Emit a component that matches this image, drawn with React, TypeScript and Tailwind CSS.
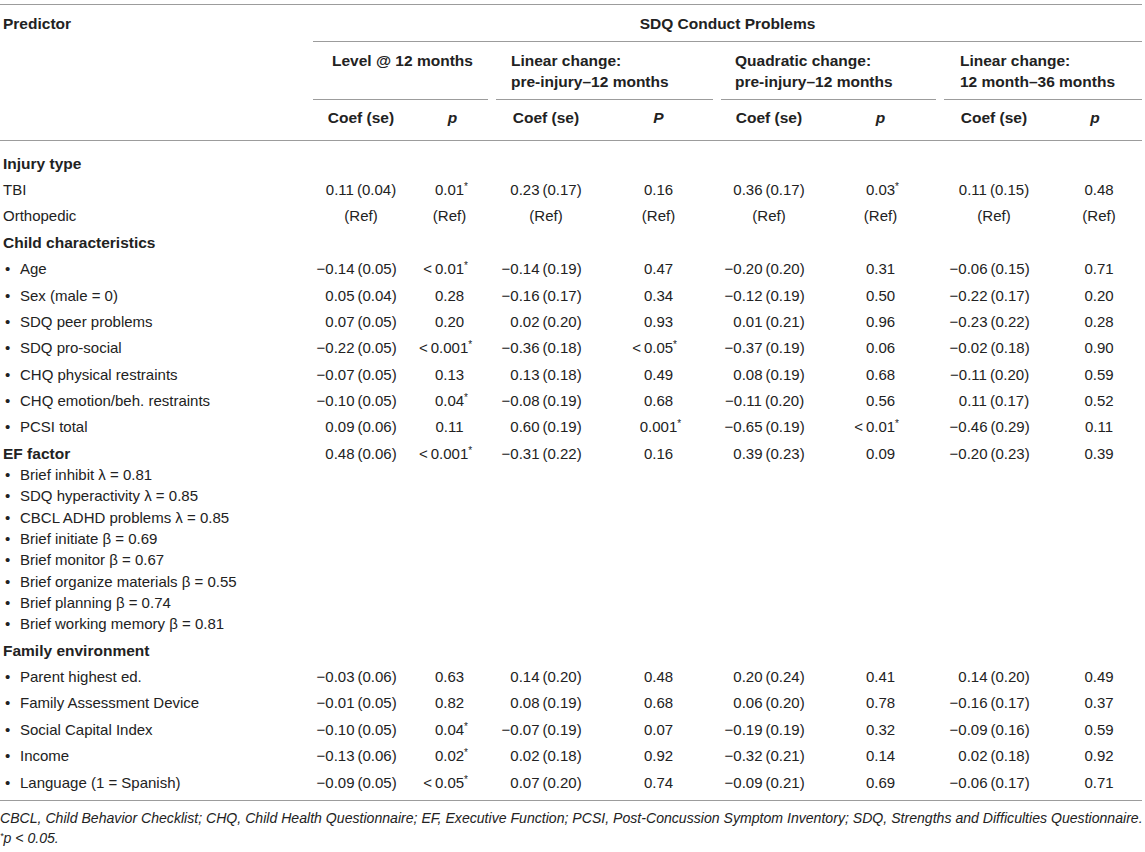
import React from "react";

type Row =
  | { kind: "head"; label: string }
  | { kind: "data"; label: string; bullet?: boolean; vals: string[] }
  | { kind: "ef"; label: string; items: string[]; vals: string[] };

const REF = ["(Ref)", "(Ref)", "(Ref)", "(Ref)", "(Ref)", "(Ref)", "(Ref)", "(Ref)"];

const rows: Row[] = [
  { kind: "head", label: "Injury type" },
  { kind: "data", label: "TBI", vals: ["0.11 (0.04)", "0.01*", "0.23 (0.17)", "0.16", "0.36 (0.17)", "0.03*", "0.11 (0.15)", "0.48"] },
  { kind: "data", label: "Orthopedic", vals: REF },
  { kind: "head", label: "Child characteristics" },
  { kind: "data", bullet: true, label: "Age", vals: ["−0.14 (0.05)", "<0.01*", "−0.14 (0.19)", "0.47", "−0.20 (0.20)", "0.31", "−0.06 (0.15)", "0.71"] },
  { kind: "data", bullet: true, label: "Sex (male = 0)", vals: ["0.05 (0.04)", "0.28", "−0.16 (0.17)", "0.34", "−0.12 (0.19)", "0.50", "−0.22 (0.17)", "0.20"] },
  { kind: "data", bullet: true, label: "SDQ peer problems", vals: ["0.07 (0.05)", "0.20", "0.02 (0.20)", "0.93", "0.01 (0.21)", "0.96", "−0.23 (0.22)", "0.28"] },
  { kind: "data", bullet: true, label: "SDQ pro-social", vals: ["−0.22 (0.05)", "<0.001*", "−0.36 (0.18)", "<0.05*", "−0.37 (0.19)", "0.06", "−0.02 (0.18)", "0.90"] },
  { kind: "data", bullet: true, label: "CHQ physical restraints", vals: ["−0.07 (0.05)", "0.13", "0.13 (0.18)", "0.49", "0.08 (0.19)", "0.68", "−0.11 (0.20)", "0.59"] },
  { kind: "data", bullet: true, label: "CHQ emotion/beh. restraints", vals: ["−0.10 (0.05)", "0.04*", "−0.08 (0.19)", "0.68", "−0.11 (0.20)", "0.56", "0.11 (0.17)", "0.52"] },
  { kind: "data", bullet: true, label: "PCSI total", vals: ["0.09 (0.06)", "0.11", "0.60 (0.19)", "0.001*", "−0.65 (0.19)", "<0.01*", "−0.46 (0.29)", "0.11"] },
  {
    kind: "ef",
    label: "EF factor",
    items: [
      "Brief inhibit λ = 0.81",
      "SDQ hyperactivity λ = 0.85",
      "CBCL ADHD problems λ = 0.85",
      "Brief initiate β = 0.69",
      "Brief monitor β = 0.67",
      "Brief organize materials β = 0.55",
      "Brief planning β = 0.74",
      "Brief working memory β = 0.81",
    ],
    vals: ["0.48 (0.06)", "<0.001*", "−0.31 (0.22)", "0.16", "0.39 (0.23)", "0.09", "−0.20 (0.23)", "0.39"],
  },
  { kind: "head", label: "Family environment" },
  { kind: "data", bullet: true, label: "Parent highest ed.", vals: ["−0.03 (0.06)", "0.63", "0.14 (0.20)", "0.48", "0.20 (0.24)", "0.41", "0.14 (0.20)", "0.49"] },
  { kind: "data", bullet: true, label: "Family Assessment Device", vals: ["−0.01 (0.05)", "0.82", "0.08 (0.19)", "0.68", "0.06 (0.20)", "0.78", "−0.16 (0.17)", "0.37"] },
  { kind: "data", bullet: true, label: "Social Capital Index", vals: ["−0.10 (0.05)", "0.04*", "−0.07 (0.19)", "0.07", "−0.19 (0.19)", "0.32", "−0.09 (0.16)", "0.59"] },
  { kind: "data", bullet: true, label: "Income", vals: ["−0.13 (0.06)", "0.02*", "0.02 (0.18)", "0.92", "−0.32 (0.21)", "0.14", "0.02 (0.18)", "0.92"] },
  { kind: "data", bullet: true, label: "Language (1 = Spanish)", vals: ["−0.09 (0.05)", "<0.05*", "0.07 (0.20)", "0.74", "−0.09 (0.21)", "0.69", "−0.06 (0.17)", "0.71"] },
];

const valPad = ["", "pr-[6px]", "", "", "", "", "", "pl-[8px]"];

function Val({ v, i }: { v: string; i: number }) {
  let core = v;
  let pre = "";
  let star = false;
  if (core.startsWith("−")) {
    pre = "−";
    core = core.slice(1);
  } else if (core.startsWith("<")) {
    pre = "<";
    core = core.slice(1);
  }
  if (core.endsWith("*")) {
    star = true;
    core = core.slice(0, -1);
  }
  core = core.replace(" ", "\u2009");
  return (
    <div className={`text-center py-[2.55px] ${valPad[i]}`}>
      <span className="relative inline-block whitespace-nowrap">
        {core}
        {pre && (
          <span className={`absolute right-full top-0 ${pre === "<" ? "pr-[3px]" : ""}`}>{pre}</span>
        )}
        {star && <span className="absolute left-full top-[-3px] text-[10px]">*</span>}
      </span>
    </div>
  );
}

function Label({ text, bullet }: { text: string; bullet?: boolean }) {
  return (
    <div className="flex whitespace-nowrap">
      {bullet && <span className="inline-block w-[17px] pl-[2px]">•</span>}
      <span>{text}</span>
    </div>
  );
}

export default function App() {
  const line = "border-[#9c9c9c]";
  return (
    <div className="bg-white min-h-[852px] pt-[4px] text-[#222] font-['Liberation_Sans',Arial,sans-serif]">
      <div className={`w-[1142px] border-t ${line}`}>
        {/* Header */}
        <div className="grid grid-cols-[309px_104px_79px_108px_117px_104px_119px_108px_94px] text-[15.5px] font-bold leading-[21px]">
          <div className={`row-span-3 pl-[3px] pt-[7.5px] border-b ${line}`}>Predictor</div>
          <div className={`col-span-8 ml-[4px] border-b ${line} text-center py-[7.5px]`}>SDQ Conduct Problems</div>

          <div className={`col-span-2 mx-[4px] border-b ${line} pl-[19px] py-[7.5px]`}>Level @ 12 months</div>
          <div className={`col-span-2 mx-[4px] border-b ${line} pl-[15px] py-[7.5px]`}>
            Linear change:
            <br />
            pre-injury–12 months
          </div>
          <div className={`col-span-2 mx-[4px] border-b ${line} pl-[14px] py-[7.5px]`}>
            Quadratic change:
            <br />
            pre-injury–12 months
          </div>
          <div className={`col-span-2 ml-[4px] border-b ${line} pl-[16px] py-[7.5px]`}>
            Linear change:
            <br />
            12 month–36 months
          </div>

          <div className={`text-center pt-[7px] pb-[12px] border-b ${line}`}>Coef (se)</div>
          <div className={`text-center pt-[7px] pb-[12px] border-b ${line} italic`}>p</div>
          <div className={`text-center pt-[7px] pb-[12px] border-b ${line}`}>Coef (se)</div>
          <div className={`text-center pt-[7px] pb-[12px] border-b ${line} italic`}>P</div>
          <div className={`text-center pt-[7px] pb-[12px] border-b ${line}`}>Coef (se)</div>
          <div className={`text-center pt-[7px] pb-[12px] border-b ${line} italic`}>p</div>
          <div className={`text-center pt-[7px] pb-[12px] border-b ${line}`}>Coef (se)</div>
          <div className={`text-center pt-[7px] pb-[12px] border-b ${line} italic`}>p</div>
        </div>

        {/* Body */}
        <div
          className={`grid grid-cols-[309px_104px_79px_108px_117px_104px_119px_108px_94px] text-[15px] leading-[21.3px] pt-[9px] pb-[4.6px] border-b ${line}`}
        >
          {rows.map((r, ri) => {
            if (r.kind === "head") {
              return (
                <div key={ri} className="col-span-9 pl-[3px] py-[2.55px] font-bold text-[15.5px]">
                  {r.label}
                </div>
              );
            }
            if (r.kind === "ef") {
              return (
                <React.Fragment key={ri}>
                  <div className="pl-[3px] py-[2.55px]">
                    <div className="font-bold text-[15.5px]">{r.label}</div>
                    {r.items.map((it) => (
                      <Label key={it} text={it} bullet />
                    ))}
                  </div>
                  {r.vals.map((v, i) => (
                    <Val key={i} v={v} i={i} />
                  ))}
                </React.Fragment>
              );
            }
            return (
              <React.Fragment key={ri}>
                <div className="pl-[3px] py-[2.55px]">
                  <Label text={r.label} bullet={r.bullet} />
                </div>
                {r.vals.map((v, i) => (
                  <Val key={i} v={v} i={i} />
                ))}
              </React.Fragment>
            );
          })}
        </div>

        {/* Footnote */}
        <div className="pt-[7px] text-[14.1px] leading-[20px] italic whitespace-nowrap">
          <div>
            CBCL, Child Behavior Checklist; CHQ, Child Health Questionnaire; EF, Executive Function; PCSI, Post-Concussion
            Symptom Inventory; SDQ, Strengths and Difficulties Questionnaire.
          </div>
          <div>
            <span className="relative top-[-4px] text-[9px]">*</span>p &lt; 0.05.
          </div>
        </div>
      </div>
    </div>
  );
}
